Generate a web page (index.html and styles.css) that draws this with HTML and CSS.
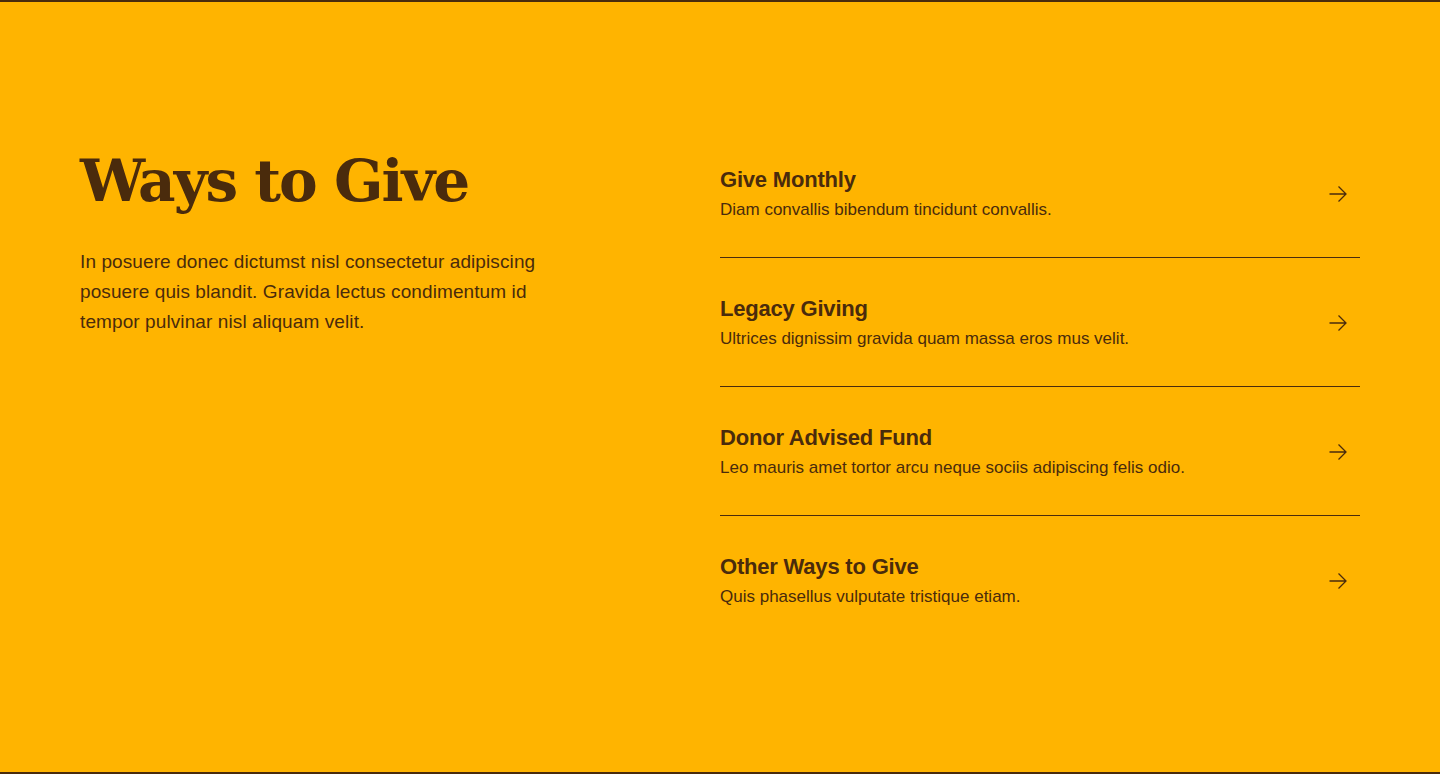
FILE: index.html
```html
<!DOCTYPE html>
<html lang="en">
<head>
<meta charset="utf-8">
<title>Ways to Give</title>
<link rel="stylesheet" href="styles.css">
</head>
<body>
<section class="ways">
  <div class="ways__intro">
    <h1 class="ways__title">Ways to Give</h1>
    <p class="ways__lead">In posuere donec dictumst nisl consectetur adipiscing posuere quis blandit. Gravida lectus condimentum id tempor pulvinar nisl aliquam velit.</p>
  </div>
  <ul class="ways__list">
    <li class="ways__item">
      <div class="ways__text">
        <h2 class="ways__name">Give Monthly</h2>
        <p class="ways__desc">Diam convallis bibendum tincidunt convallis.</p>
      </div>
      <svg class="ways__arrow" viewBox="0 0 24 24" width="24" height="24" aria-hidden="true"><path d="M3.5 12h16.5M12.5 4.5l7.5 7.5-7.5 7.5" fill="none" stroke="currentColor" stroke-width="1.3"/></svg>
    </li>
    <li class="ways__item">
      <div class="ways__text">
        <h2 class="ways__name">Legacy Giving</h2>
        <p class="ways__desc">Ultrices dignissim gravida quam massa eros mus velit.</p>
      </div>
      <svg class="ways__arrow" viewBox="0 0 24 24" width="24" height="24" aria-hidden="true"><path d="M3.5 12h16.5M12.5 4.5l7.5 7.5-7.5 7.5" fill="none" stroke="currentColor" stroke-width="1.3"/></svg>
    </li>
    <li class="ways__item">
      <div class="ways__text">
        <h2 class="ways__name">Donor Advised Fund</h2>
        <p class="ways__desc">Leo mauris amet tortor arcu neque sociis adipiscing felis odio.</p>
      </div>
      <svg class="ways__arrow" viewBox="0 0 24 24" width="24" height="24" aria-hidden="true"><path d="M3.5 12h16.5M12.5 4.5l7.5 7.5-7.5 7.5" fill="none" stroke="currentColor" stroke-width="1.3"/></svg>
    </li>
    <li class="ways__item">
      <div class="ways__text">
        <h2 class="ways__name">Other Ways to Give</h2>
        <p class="ways__desc">Quis phasellus vulputate tristique etiam.</p>
      </div>
      <svg class="ways__arrow" viewBox="0 0 24 24" width="24" height="24" aria-hidden="true"><path d="M3.5 12h16.5M12.5 4.5l7.5 7.5-7.5 7.5" fill="none" stroke="currentColor" stroke-width="1.3"/></svg>
    </li>
  </ul>
</section>
</body>
</html>
```
FILE: styles.css
```css
* { box-sizing: border-box; }
html, body { margin: 0; padding: 0; }
body {
  background: #ffb400;
  color: #4a2b0c;
  font-family: "Liberation Sans", Arial, sans-serif;
}
.ways {
  height: 774px;
  border-top: 2px solid #4a2b0c;
  border-bottom: 2px solid #4a2b0c;
  padding: 127px 80px 0;
  display: grid;
  grid-template-columns: 640px 640px;
  align-items: start;
}
.ways__intro {
  padding-top: 12px;
}
.ways__title {
  margin: 0;
  font-family: "DejaVu Serif", "Liberation Serif", serif;
  font-weight: 700;
  font-size: 58px;
  line-height: 80px;
  letter-spacing: -2px;
}
.ways__lead {
  margin: 26px 0 0;
  max-width: 480px;
  font-size: 19px;
  line-height: 30px;
  letter-spacing: 0.1px;
}
.ways__list {
  list-style: none;
  margin: 0;
  padding: 0;
}
.ways__item {
  display: flex;
  align-items: center;
  justify-content: space-between;
  padding: 36px 10px 35px 0;
  border-bottom: 1px solid #4a2b0c;
}
.ways__item:last-child { border-bottom: 0; }
.ways__name {
  margin: 0;
  font-size: 22px;
  line-height: 30px;
  font-weight: 700;
  letter-spacing: -0.2px;
}
.ways__desc {
  margin: 3px 0 0;
  font-size: 17px;
  line-height: 24px;
}
.ways__arrow { display: block; flex: none; }
```
